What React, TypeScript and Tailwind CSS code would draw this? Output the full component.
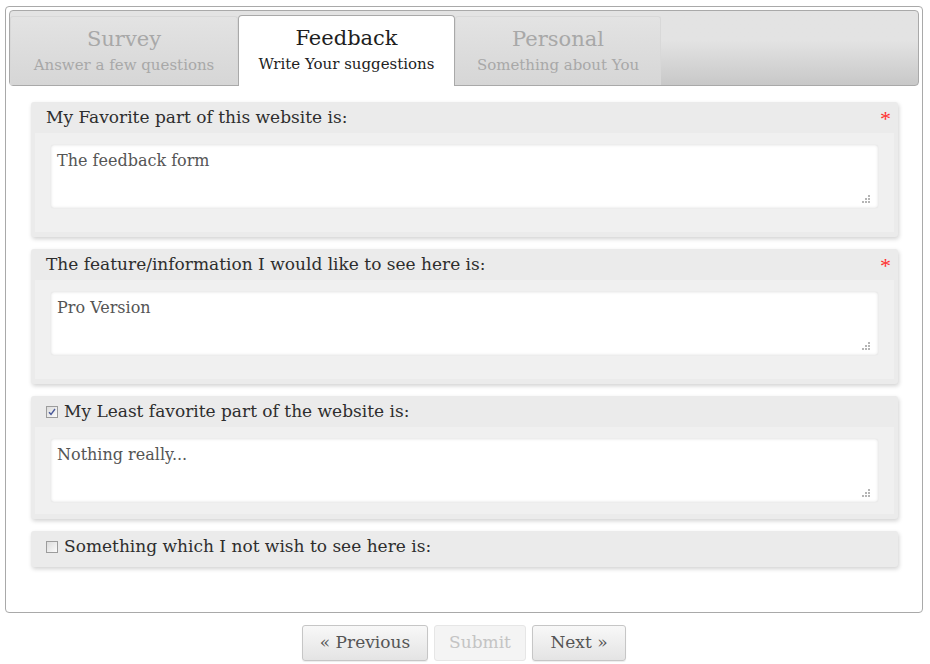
import React from 'react';

const font = { fontFamily: '"DejaVu Serif", "Liberation Serif", serif' };

type Tab = { title: string; sub: string; active?: boolean; width: string };

const tabs: Tab[] = [
  { title: 'Survey', sub: 'Answer a few questions', width: 'w-[228px]' },
  { title: 'Feedback', sub: 'Write Your suggestions', active: true, width: 'w-[217px]' },
  { title: 'Personal', sub: 'Something about You', width: 'w-[206px]' },
];

const Check: React.FC<{ checked?: boolean }> = ({ checked }) => (
  <span className="flex h-[12px] w-[12px] items-center justify-center border border-[#9c9c9c] bg-gradient-to-br from-[#dcdcdc] to-[#fbfbfb]">
    {checked && (
      <svg width="8" height="8" viewBox="0 0 8 8">
        <path d="M1 4.2 L3 6.3 L7 1" fill="none" stroke="#4a5a9a" strokeWidth="1.4" />
      </svg>
    )}
  </span>
);

const Grip = () => (
  <svg width="8" height="8" viewBox="0 0 8 8" className="pointer-events-none absolute bottom-[5px] right-[8px]">
    <g fill="#b5b5b5">
      <rect x="6" y="0" width="2" height="2" />
      <rect x="3" y="3" width="2" height="2" />
      <rect x="6" y="3" width="2" height="2" />
      <rect x="0" y="6" width="2" height="2" />
      <rect x="3" y="6" width="2" height="2" />
      <rect x="6" y="6" width="2" height="2" />
    </g>
  </svg>
);

const Panel: React.FC<{
  label: string;
  value?: string;
  required?: boolean;
  checkbox?: boolean;
  checked?: boolean;
  tall?: boolean;
}> = ({ label, value, required, checkbox, checked, tall }) => (
  <div className="rounded-[3px] bg-[#ebebeb] shadow-[1px_2px_4px_rgba(0,0,0,0.18)]">
    <div className="flex h-[31px] items-center justify-between pl-[15px] pr-[7px]">
      <div className="flex items-center gap-[6px] text-[17px] text-[#2e2e2e]">
        {checkbox && <Check checked={checked} />}
        <span>{label}</span>
      </div>
      {required && (
        <span
          style={{ fontFamily: '"Liberation Serif", serif' }}
          className="mt-[2px] text-[22px] leading-none text-[#ff3030]"
        >
          *
        </span>
      )}
    </div>
    {value !== undefined ? (
      <div className={`mx-[4px] mb-[5px] bg-[#f0f0f0] px-[16px] pt-[12px] ${tall ? 'pb-[24px]' : 'pb-[12px]'}`}>
        <div className="relative">
          <textarea
            defaultValue={value}
            style={font}
            className="block h-[63px] w-full resize-none rounded-[3px] bg-white px-[6px] py-[4px] text-[16px] text-[#555] shadow-[inset_0_0_3px_rgba(0,0,0,0.12),0_0_2px_rgba(0,0,0,0.06)] outline-none"
          />
          <Grip />
        </div>
      </div>
    ) : (
      <div className="h-[5px]" />
    )}
  </div>
);

export default function App() {
  return (
    <div style={font} className="min-h-screen bg-white pl-[5px] pt-[6px]">
      <div className="flex h-[607px] w-[918px] flex-col rounded-[4px] border border-[#a9a9a9] p-[3px]">
        {/* tab bar */}
        <div className="flex h-[76px] items-end rounded-[4px] border border-[#a9a9a9] bg-gradient-to-b from-[#e3e3e3] from-40% to-[#c8c8c8]">
          {tabs.map((t) =>
            t.active ? (
              <div
                key={t.title}
                className={`${t.width} -mb-px flex h-[71px] flex-col items-center rounded-t-[4px] border border-b-0 border-[#a9a9a9] bg-white pt-[8px]`}
              >
                <div className="text-[21px] leading-[28px] text-[#1e1e1e]">{t.title}</div>
                <div className="mt-[2px] text-[15px] leading-[20px] text-[#222]">{t.sub}</div>
              </div>
            ) : (
              <div
                key={t.title}
                className={`${t.width} flex h-[69px] flex-col items-center rounded-t-[3px] border border-b-0 border-[#d8d8d8] bg-gradient-to-b from-[#e3e3e3] to-[#d6d6d6] pt-[8px]`}
              >
                <div className="text-[21px] leading-[28px] text-[#a8a8a8]">{t.title}</div>
                <div className="mt-[2px] text-[15px] leading-[20px] text-[#a8a8a8]">{t.sub}</div>
              </div>
            )
          )}
        </div>

        {/* panels */}
        <div className="flex flex-col gap-[12px] pl-[22px] pr-[21px] pt-[16px]">
          <Panel label="My Favorite part of this website is:" value="The feedback form" required tall />
          <Panel label="The feature/information I would like to see here is:" value="Pro Version" required tall />
          <Panel label="My Least favorite part of the website is:" value="Nothing really..." checkbox checked />
          <Panel label="Something which I not wish to see here is:" checkbox />
        </div>
      </div>

      {/* buttons */}
      <div className="mt-[12px] flex w-[918px] justify-center gap-[6px]">
        <button className="h-[36px] w-[126px] rounded-[3px] border border-[#c6c6c6] bg-gradient-to-b from-[#f8f8f8] to-[#e4e4e4] text-[17px] text-[#555] shadow-[0_1px_1px_rgba(0,0,0,0.08)]">
          « Previous
        </button>
        <button className="h-[36px] w-[92px] rounded-[3px] border border-[#e6e6e6] bg-[#f4f4f4] text-[17px] text-[#c4c4c4]">
          Submit
        </button>
        <button className="h-[36px] w-[94px] rounded-[3px] border border-[#c6c6c6] bg-gradient-to-b from-[#f8f8f8] to-[#e4e4e4] text-[17px] text-[#555] shadow-[0_1px_1px_rgba(0,0,0,0.08)]">
          Next »
        </button>
      </div>
    </div>
  );
}
